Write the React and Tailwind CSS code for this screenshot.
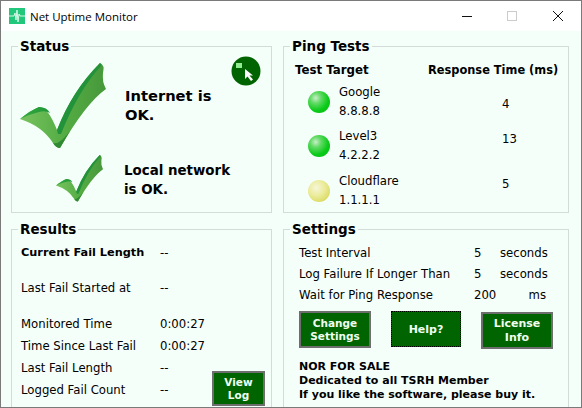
function Check({ w, h, id }) {
  return (
    <svg width={w} height={h} viewBox="0 0 86 86" className="shrink-0">
      <defs>
        <linearGradient id={id + "a"} x1="0" y1="0.4" x2="1" y2="0.4">
          <stop offset="0" stopColor="#78c25f" />
          <stop offset="0.5" stopColor="#55ad44" />
          <stop offset="1" stopColor="#46983a" />
        </linearGradient>
        <linearGradient id={id + "b"} x1="0" y1="0" x2="1" y2="0">
          <stop offset="0" stopColor="#35ab40" />
          <stop offset="1" stopColor="#1f9637" />
        </linearGradient>
      </defs>
      <path d="M0 56 Q11 47 19 44 Q28 44 37 67 Q52 28 80 0 Q85 2 83 10 Q82 19 86 26 Q66 40 40 85 Q36 85 33 80 Q22 63 0 56Z" fill={`url(#${id}a)`} />
      <path d="M0 56 Q11 47 19 44 Q27 44 30 50 Q25 47 19 49 Q10 51 0 56Z" fill={`url(#${id}b)`} />
      <path d="M37 67 Q52 28 80 0 Q82 1 81 3 Q58 28 41 71 L38 71Z" fill="#23933b" />
      <path d="M33 80 Q36 85 40 85 L50 68 Q44 76 39 79 Q36 81 33 80Z" fill="#2f8a33" />
    </svg>
  );
}

function Ball({ color }) {
  const g = color === "green"
    ? "bg-[radial-gradient(circle_at_35%_32%,#c8eec8_0%,#62da66_26%,#0ccb1a_60%,#00b80c_100%)]"
    : "bg-[radial-gradient(circle_at_38%_35%,#f6f6d8_0%,#ecec9e_40%,#dcdc66_75%,#c6c632_100%)]";
  return <span className={`block w-[22px] h-[22px] rounded-full shrink-0 ${g}`} />;
}

function Panel({ title, children, className = "" }) {
  return (
    <fieldset className={`relative border border-[#d3dcd8] px-0 m-0 min-w-0 ${className}`}>
      <legend className="ml-[6px] px-[2px] text-[13.5px] leading-[18px] font-bold text-black">{title}</legend>
      {children}
    </fieldset>
  );
}

function GreenButton({ children, className = "" }) {
  return (
    <button className={`flex items-center justify-center text-center bg-[#006400] text-[#f0fff0] font-bold text-[10.5px] leading-[13px] ${className}`}>
      {children}
    </button>
  );
}

function Ping({ color, name, ip, ms, msClass, rowClass }) {
  return (
    <div className={`flex items-center ${rowClass}`}>
      <span className="ml-[24px]"><Ball color={color} /></span>
      <div className="ml-[9px] w-[163px] leading-[19px]">
        <div>{name}</div>
        <div>{ip}</div>
      </div>
      <span className={msClass}>{ms}</span>
    </div>
  );
}

function Result({ label, value, bold, h }) {
  return (
    <div className={`flex items-center ${h}`}>
      <span className={`w-[139px] ${bold ? "font-bold text-[11.3px]" : ""}`}>{label}</span>
      <span>{value}</span>
    </div>
  );
}

function Setting({ label, value, unit }) {
  return (
    <div className="flex items-center h-[21px]">
      <span className="w-[175px]">{label}</span>
      <span className="w-[26px]">{value}</span>
      <span className="w-[46px] text-right">{unit}</span>
    </div>
  );
}

export default function App() {
  return (
    <div className="w-[582px] h-[408px] overflow-hidden flex flex-col border border-[#7a7a7a] bg-[#f5fffa] text-[11.7px] text-black [font-family:'DejaVu_Sans',sans-serif]">
      <header className="h-[30px] bg-white flex items-center shrink-0">
        <svg width="16" height="16" viewBox="0 0 16 16" className="ml-[8px]">
          <rect width="16" height="16" fill="#22c77c" />
          <path d="M0 8H5L6 5L7 12L8 2L9 14L10 6L11 8H16" fill="none" stroke="#d8f8e8" strokeWidth="1" />
        </svg>
        <span className="ml-[5px] pt-[1px] text-[11.5px] [font-family:'Open_Sans',sans-serif]">Net Uptime Monitor</span>
        <div className="ml-auto flex items-center">
          <svg width="10" height="10" viewBox="0 0 10 10" className="mr-[35px]"><path d="M0 5.5H10" stroke="#111" /></svg>
          <svg width="10" height="10" viewBox="0 0 10 10" className="mr-[36px]"><rect x="0.5" y="0.5" width="9" height="9" fill="none" stroke="#ccc" /></svg>
          <svg width="10" height="10" viewBox="0 0 10 10" className="mr-[18px]"><path d="M0 0L10 10M10 0L0 10" stroke="#111" /></svg>
        </div>
      </header>
      <main className="flex-1 min-h-0 grid grid-cols-[261px_286px] gap-x-[11px] grid-rows-[176px_1fr] gap-y-[7px] pl-[10px] pt-[6px]">
        <Panel title="Status">
          <svg width="30" height="30" viewBox="0 0 30 30" className="absolute right-[10px] top-[1px]">
            <circle cx="15" cy="15" r="14.5" fill="#006400" />
            <rect x="5" y="7" width="6" height="5" fill="#90ee90" />
            <path d="M14 13V23L16.5 20.5L20 25L22 23.5L18.5 19.5H22Z" fill="#fff" />
          </svg>
          <div className="flex mt-[8px]">
            <span className="ml-[8px]"><Check w={86} h={86} id="c1" /></span>
            <p className="ml-[19px] mt-[23px] text-[14.7px] leading-[19px] font-bold w-[110px]">Internet is OK.</p>
          </div>
          <div className="flex mt-[6px]">
            <span className="ml-[44px]"><Check w={47} h={47} id="c2" /></span>
            <p className="ml-[21px] mt-[6px] text-[13.4px] leading-[19px] font-bold w-[120px]">Local network is OK.</p>
          </div>
        </Panel>
        <Panel title="Ping Tests">
          <div className="flex font-bold text-[11.4px] h-[16px] items-center mt-[8px] mb-[4px]">
            <span className="ml-[11px] w-[133px] text-[11.8px]">Test Target</span>
            <span>Response Time (ms)</span>
          </div>
          <Ping color="green" name="Google" ip="8.8.8.8" ms="4" msClass="mt-[6px]" rowClass="h-[38px] mb-[6px]" />
          <Ping color="green" name="Level3" ip="4.2.2.2" ms="13" msClass="mb-[12px]" rowClass="h-[38px] mb-[7px]" />
          <Ping color="yellow" name="Cloudflare" ip="1.1.1.1" ms="5" msClass="mb-[12px]" rowClass="h-[38px]" />
        </Panel>
        <Panel title="Results" className="h-[230px]">
          <div className="pl-[9px] pt-[5px]">
            <Result label="Current Fail Length" value="--" bold h="h-[21px]" />
            <Result label="Last Fail Started at" value="--" h="h-[50px]" />
            <Result label="Monitored Time" value="0:00:27" h="h-[22px]" />
            <Result label="Time Since Last Fail" value="0:00:27" h="h-[22px]" />
            <Result label="Last Fail Length" value="--" h="h-[22px]" />
            <Result label="Logged Fail Count" value="--" h="h-[22px]" />
          </div>
          <GreenButton className="absolute left-[200px] top-[133px] w-[53px] h-[35px] border-2 border-[#6e6e6e]">View<br />Log</GreenButton>
        </Panel>
        <Panel title="Settings" className="h-[230px]">
          <div className="pl-[15px] pt-[5px]">
            <Setting label="Test Interval" value="5" unit="seconds" />
            <Setting label="Log Failure If Longer Than" value="5" unit="seconds" />
            <Setting label="Wait for Ping Response" value="200" unit="ms" />
            <div className="flex mt-[5px] items-start">
              <GreenButton className="w-[72px] h-[37px] border-2 border-[#6e6e6e]">Change<br />Settings</GreenButton>
              <GreenButton className="ml-[20px] w-[70px] h-[36px] border border-dotted border-black text-[11px]">Help?</GreenButton>
              <GreenButton className="ml-[20px] mt-[1px] w-[72px] h-[37px] border-2 border-[#6e6e6e] text-[11px] leading-[14px]">License<br />Info</GreenButton>
            </div>
            <p className="mt-[11px] font-bold text-[11px] leading-[14px]">NOR FOR SALE<br />Dedicated to all TSRH Member<br />If you like the software, please buy it.</p>
          </div>
        </Panel>
      </main>
    </div>
  );
}
